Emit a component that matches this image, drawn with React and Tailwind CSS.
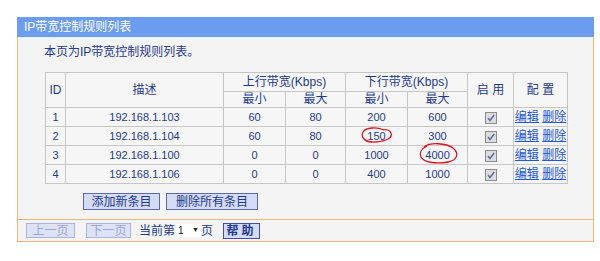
import React from "react";

const rows = [
  ["1", "192.168.1.103", "60", "80", "200", "600"],
  ["2", "192.168.1.104", "60", "80", "150", "300"],
  ["3", "192.168.1.100", "0", "0", "1000", "4000"],
  ["4", "192.168.1.106", "0", "0", "400", "1000"],
];

function Check() {
  return (
    <svg width="12" height="12" viewBox="0 0 12 12" className="inline-block align-middle">
      <rect x="0.5" y="0.5" width="11" height="11" fill="#dcdcdc" stroke="#8c8c8c" />
      <path d="M3 6 L5 8.5 L9.2 3" fill="none" stroke="#5a6a9a" strokeWidth="1.4" />
    </svg>
  );
}

export default function App() {
  const font = { fontFamily: '"Liberation Sans", "Noto Sans CJK SC", sans-serif' };
  const td = "border border-[#c6c6c6] text-center p-0 leading-[13px]";
  return (
    <div
      className="relative w-[600px] h-[261px] bg-white pt-[17px] pl-[17px] text-[11px] text-[#1e3a8c]"
      style={font}
    >
      <div className="w-[577px]">
        <div className="h-[20px] bg-[#6c9cef] text-white flex items-center pl-[7px] text-[12px]">
          IP带宽控制规则列表
        </div>
        <div className="bg-[#f4f4f4] border-x border-[#f2b878]">
          <div className="pt-[9px] pl-[26px] text-[12px] leading-[13px] text-[#1e3a8c]">
            本页为IP带宽控制规则列表。
          </div>
          <div className="pl-[27px] pt-[13px]">
            <table className="table-fixed border-collapse w-[522px] bg-[#f6f6f6]">
              <colgroup>
                <col className="w-[20px]" />
                <col className="w-[158px]" />
                <col className="w-[62px]" />
                <col className="w-[60px]" />
                <col className="w-[62px]" />
                <col className="w-[60px]" />
                <col className="w-[46px]" />
                <col className="w-[54px]" />
              </colgroup>
              <thead>
                <tr className="h-[19px] text-[12px]">
                  <td className={td} rowSpan={2}>ID</td>
                  <td className={td} rowSpan={2}>描述</td>
                  <td className={td} colSpan={2}>上行带宽(Kbps)</td>
                  <td className={td} colSpan={2}>下行带宽(Kbps)</td>
                  <td className={td} rowSpan={2}>启 用</td>
                  <td className={td} rowSpan={2}>配 置</td>
                </tr>
                <tr className="h-[16px] text-[12px]">
                  <td className={td}>最小</td>
                  <td className={td}>最大</td>
                  <td className={td}>最小</td>
                  <td className={td}>最大</td>
                </tr>
              </thead>
              <tbody>
                {rows.map((r) => (
                  <tr key={r[0]} className="h-[19px]">
                    <td className={td}>{r[0]}</td>
                    <td className={td}>{r[1]}</td>
                    <td className={td}>{r[2]}</td>
                    <td className={td}>{r[3]}</td>
                    <td className={td}>{r[4]}</td>
                    <td className={td}>{r[5]}</td>
                    <td className={td}><Check /></td>
                    <td className={td + " text-[12px]"}>
                      <span className="text-[#2457d6] underline">编辑</span>{" "}
                      <span className="text-[#2457d6] underline">删除</span>
                    </td>
                  </tr>
                ))}
              </tbody>
            </table>
          </div>
          <div className="flex gap-[6px] pl-[65px] pt-[9px] pb-[9px] text-[12px]">
            <div className="w-[77px] h-[17px] flex items-center justify-center bg-[#d4dbf5] border border-[#5b6ab0] text-[#1e3a8c]">
              添加新条目
            </div>
            <div className="w-[92px] h-[17px] flex items-center justify-center bg-[#d4dbf5] border border-[#5b6ab0] text-[#1e3a8c]">
              删除所有条目
            </div>
          </div>
        </div>
        <div className="bg-[#f4f4f4] border border-[#f2b878] h-[23px] flex items-center pl-[8px] text-[12px]">
          <div className="w-[49px] h-[15px] flex items-center justify-center bg-[#dde2f6] border border-[#a9b4e0] text-[#9aa6d4]">
            上一页
          </div>
          <div className="ml-[11px] w-[45px] h-[15px] flex items-center justify-center bg-[#dde2f6] border border-[#a9b4e0] text-[#9aa6d4]">
            下一页
          </div>
          <span className="ml-[8px]">当前第</span>
          <div className="ml-[1px] w-[25px] h-[13px] bg-white flex items-center justify-between px-[2px] text-[10px] text-[#222]">
            <span>1</span>
            <span className="text-[7px]">▼</span>
          </div>
          <span>页</span>
          <div className="ml-[10px] w-[37px] h-[16px] flex items-center justify-center bg-[#d4dbf5] border border-[#3f4f9a] text-[#1e3a8c] font-bold tracking-[3px]">
            帮助
          </div>
        </div>
      </div>
      <svg className="absolute inset-0 pointer-events-none" width="600" height="261">
        <path
          d="M384 130 C377 127 366 127 363 132 C360 138 366 143 376 142 C386 141 393 138 391 133 C390 130 386 129 383 130"
          fill="none"
          stroke="#e0141e"
          strokeWidth="1.3"
        />
        <path
          d="M424 147 C430 142 446 143 453 148 C459 153 458 160 448 162 C438 164 424 163 421 157 C419 152 421 149 427 146"
          fill="none"
          stroke="#e0141e"
          strokeWidth="1.3"
        />
      </svg>
    </div>
  );
}
